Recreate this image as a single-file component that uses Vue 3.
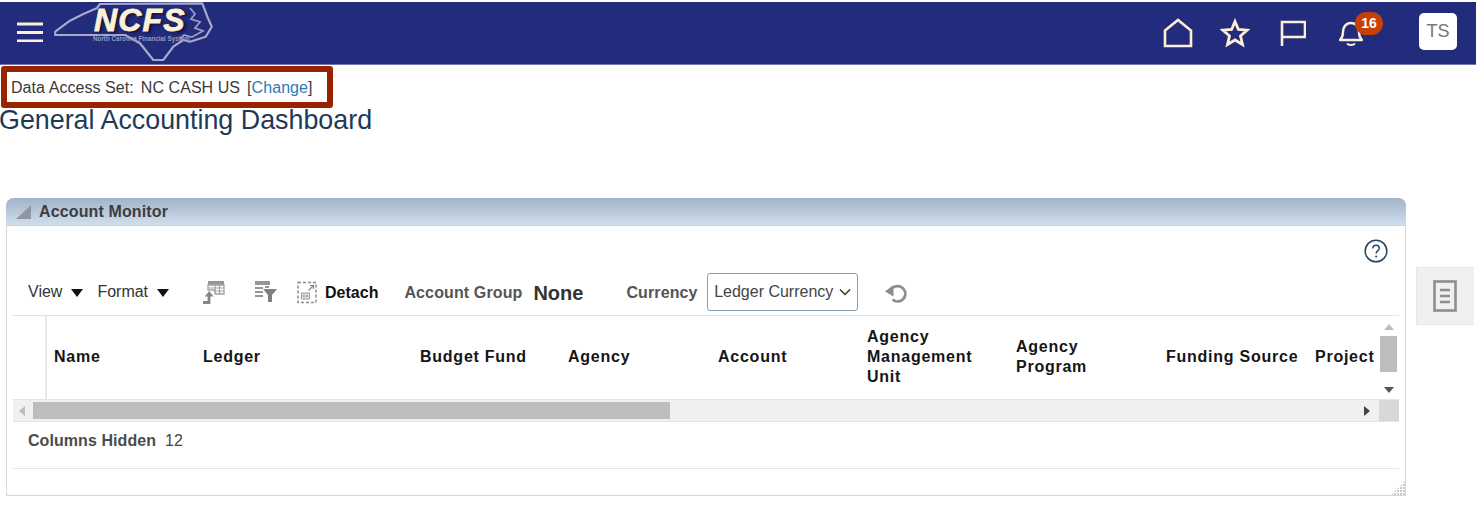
<script setup>
const columns = [
  { label: 'Name', w: 149 },
  { label: 'Ledger', w: 217 },
  { label: 'Budget Fund', w: 148 },
  { label: 'Agency', w: 150 },
  { label: 'Account', w: 149 },
  { label: 'Agency Management Unit', w: 149 },
  { label: 'Agency Program', w: 150 },
  { label: 'Funding Source', w: 149 },
  { label: 'Project', w: 65 },
]
</script>

<template>
  <div class="page">
    <header class="topbar">
      <div class="brand">
        <svg class="burger" width="26" height="20" viewBox="0 0 26 20">
          <path d="M0 2h26M0 10.500h26M0 19h26" stroke="#fdf0d6" stroke-width="3" fill="none" />
        </svg>
        <div class="logo">
          <svg width="160" height="62" viewBox="0 0 160 62">
            <path d="M1.200 29.700 16 18.700 29.300 12 42.700 6.300 46 2 148.300 1.300 153.300 14.700 157.800 24.700 151.700 34.700 136 39.700 129.300 38 119.300 44.700 109.300 58 99.300 58 86 41.300 71 33 39.300 33 1.200 33Z" fill="none" stroke="#a6a9c8" stroke-width="2.200" stroke-linejoin="round" />
            <path d="M136 6 141 12 137 17 146 20 141 26 149 29 138 35 130 33 126 37" fill="none" stroke="#9a9dc0" stroke-width="1.800" />
          </svg>
          <span class="logo-word">NCFS</span>
          <span class="logo-sub">North Carolina Financial System</span>
        </div>
      </div>
      <nav class="actions">
        <svg class="ico" width="30" height="30" viewBox="0 0 30 30">
          <path d="M2 12.500 15 2l13 10.500V28H2Z" fill="none" stroke="#fdf0d6" stroke-width="2.600" stroke-linejoin="miter" />
        </svg>
        <svg class="ico" width="30" height="30" viewBox="0 0 30 30">
          <path d="M15 3.500 18.400 11.500 27 12.200 20.500 17.900 22.500 26.500 15 22 7.500 26.500 9.500 17.900 3 12.200 11.600 11.500Z" fill="none" stroke="#fdf0d6" stroke-width="2.800" stroke-linejoin="miter" />
        </svg>
        <svg class="ico" width="26" height="26" viewBox="0 0 26 26">
          <path d="M2 26V2h23v15H2" fill="none" stroke="#fdf0d6" stroke-width="2.600" />
        </svg>
        <div class="bell">
          <svg width="24" height="26" viewBox="0 0 24 26">
            <path d="M1 20c2-2 3-4 3-8 0-5 3-9 8-9s8 4 8 9c0 4 1 6 3 8Z" fill="none" stroke="#fdf0d6" stroke-width="2.400" stroke-linejoin="round" />
            <path d="M8 23.500c1.500 2 6.500 2 8 0" fill="none" stroke="#fdf0d6" stroke-width="2" />
          </svg>
          <span class="badge">16</span>
        </div>
        <div class="avatar">TS</div>
      </nav>
    </header>

    <div class="das">
      <span>Data Access Set:</span>
      <span class="das-value">NC CASH US</span>
      <span class="das-change">[<a class="link">Change</a>]</span>
    </div>
    <h1 class="title">General Accounting Dashboard</h1>

    <div class="content">
      <section class="panel">
        <div class="panel-head">
          <span class="disclosure"></span>
          <span class="panel-title">Account Monitor</span>
        </div>
        <div class="panel-body">
          <div class="help-row">
            <svg width="24" height="24" viewBox="0 0 24 24">
              <circle cx="12" cy="12" r="10.800" fill="none" stroke="#26435f" stroke-width="1.500" />
              <path d="M8.800 9.500c0-2 1.400-3.300 3.300-3.300s3.200 1.200 3.200 3c0 2.600-3.200 2.700-3.200 5.300" fill="none" stroke="#26435f" stroke-width="1.400" />
              <circle cx="12.100" cy="17.600" r="1" fill="#26435f" />
            </svg>
          </div>
          <div class="toolbar">
            <span class="menu view">View<i class="caret"></i></span>
            <span class="menu format">Format<i class="caret"></i></span>
            <svg class="tool t1" width="22" height="24" viewBox="0 0 22 24">
              <path d="M5 1h16v4H5Z" fill="#969696" />
              <path d="M5 5h16v9H12V10H5Z" fill="none" stroke="#a3a3a3" stroke-width="1.300" />
              <path d="M5 8h16M12 2v11M16.500 2v12M12 11h9" stroke="#a3a3a3" stroke-width="1.200" />
              <path d="M0 22.500h6V16" fill="none" stroke="#858585" stroke-width="2.800" />
              <path d="M1.800 16.500 6.200 11l4.400 5.500Z" fill="#858585" />
            </svg>
            <svg class="tool t2" width="22" height="22" viewBox="0 0 22 22">
              <path d="M0 0h15v4H0ZM0 6h8v2H0ZM0 10h8v2H0ZM0 14h8v2H0Z" fill="#969696" />
              <path d="M10 6h4" stroke="#969696" stroke-width="2" />
              <path d="M8 8h14l-5 6v7h-4v-7Z" fill="#7f7f7f" />
            </svg>
            <svg class="tool t3" width="23" height="23" viewBox="0 0 23 23">
              <rect x="2" y="1.500" width="18" height="20" fill="none" stroke="#8a8a8a" stroke-width="1.500" stroke-dasharray="3 2" />
              <path d="M5.500 12h8v6h-8ZM5.500 15h8M8 12v6M11 12v6" fill="none" stroke="#9a9a9a" stroke-width="1" />
              <path d="M12.500 9.500l4.500-4.500M14 4.500h3.500V8" fill="none" stroke="#8a8a8a" stroke-width="1.200" />
            </svg>
            <span class="detach">Detach</span>
            <span class="lbl group">Account Group</span>
            <span class="none">None</span>
            <span class="lbl currency">Currency</span>
            <span class="select">Ledger Currency
              <svg width="12" height="8" viewBox="0 0 12 8"><path d="M1 1.500 6 6.500l5-5" fill="none" stroke="#333" stroke-width="1.500" /></svg>
            </span>
            <svg class="refresh" width="22" height="20" viewBox="0 0 22 20">
              <path d="M8 3.700A7.700 7.700 0 1 1 7.500 15.500" fill="none" stroke="#8d8d8d" stroke-width="2.700" />
              <path d="M8.500 1v11.500L0 7.500Z" fill="#8d8d8d" />
            </svg>
          </div>

          <div class="table">
            <div class="table-top">
              <div class="grid">
                <div class="spacer"></div>
                <div v-for="c in columns" :key="c.label" class="col" :style="{ width: c.w + 'px' }">{{ c.label }}</div>
              </div>
              <div class="vscroll">
                <i class="arrow up"></i>
                <i class="vthumb"></i>
                <i class="arrow down"></i>
              </div>
            </div>
            <div class="hscroll">
              <div class="htrack">
                <i class="arrow left"></i>
                <i class="hthumb"></i>
                <i class="arrow right"></i>
              </div>
              <div class="corner"></div>
            </div>
          </div>

          <div class="hidden-row"><b>Columns Hidden</b><span>12</span></div>
          <div class="foot"></div>
          <svg class="grip" width="14" height="14" viewBox="0 0 14 14">
            <defs>
              <pattern id="dots" width="3" height="3" patternUnits="userSpaceOnUse"><rect width="2" height="2" fill="#c8c8c8" /></pattern>
            </defs>
            <path d="M14 0V14H0Z" fill="url(#dots)" />
          </svg>
        </div>
      </section>

      <aside class="sidetab">
        <svg width="24" height="32" viewBox="0 0 24 32">
          <rect x="1.500" y="1.500" width="21" height="29" fill="none" stroke="#8f8f8f" stroke-width="2.600" />
          <path d="M7 10h10M7 16h10M7 22h10" stroke="#8f8f8f" stroke-width="2.400" />
        </svg>
      </aside>
    </div>
  </div>
</template>

<style>
html, body { margin: 0; background: #fff; }
</style>

<style scoped>
.page {
  width: 1476px;
  height: 506px;
  overflow: hidden;
  padding-top: 2px;
  box-sizing: border-box;
  font-family: "Liberation Sans", Arial, sans-serif;
  color: #333;
}
.topbar {
  height: 62px;
  background: #232b7c;
  border-bottom: 1px solid #6f76ac;
  display: flex;
  justify-content: space-between;
  align-items: stretch;
}
.brand { display: flex; align-items: flex-start; }
.burger { margin: 20px 11px 0 17px; }
.logo { position: relative; width: 160px; height: 62px; }
.logo svg { display: block; }
.logo-word {
  position: absolute;
  left: 40px;
  top: 5px;
  font-size: 32px;
  line-height: 26px;
  font-weight: 700;
  font-style: italic;
  letter-spacing: 1.200px;
  color: #fdf0d6;
  -webkit-text-stroke: 0.8px #fdf0d6;
  text-shadow: 2px 1px 2px #14183f, 3px 2px 3px rgba(15, 18, 50, 0.7);
}
.logo-sub {
  position: absolute;
  left: 39px;
  top: 33px;
  font-size: 6.300px;
  line-height: 8px;
  font-weight: 700;
  white-space: nowrap;
  color: #9699bd;
}
.actions { display: flex; align-items: flex-start; }
.ico { display: block; }
.ico:nth-child(1) { margin-top: 16px; margin-right: 27px; }
.ico:nth-child(2) { margin-top: 16px; margin-right: 30px; }
.ico:nth-child(3) { margin-top: 18px; margin-right: 33px; }
.bell { position: relative; width: 24px; height: 26px; margin-top: 18px; margin-right: 56px; }
.bell svg { display: block; }
.badge {
  position: absolute;
  left: 16px;
  top: -8px;
  width: 28px;
  height: 23px;
  border-radius: 12px;
  background: #c63f05;
  color: #fff;
  font-size: 14px;
  font-weight: 700;
  line-height: 23px;
  text-align: center;
}
.avatar {
  width: 38px;
  height: 37px;
  margin-top: 11px;
  margin-right: 19px;
  background: #fff;
  border-radius: 5px;
  color: #777;
  font-size: 18px;
  line-height: 37px;
  text-align: center;
}
.das {
  box-sizing: border-box;
  width: 332px;
  height: 42px;
  margin: 1px 0 0 1px;
  border: 6px solid #982300;
  border-radius: 3px;
  padding: 2px 0 0 4px;
  display: flex;
  align-items: center;
  font-size: 16px;
  letter-spacing: 0.06px;
  color: #3a3a3a;
  white-space: nowrap;
}
.das-value { margin-left: 7px; }
.das-change { margin-left: 7px; }
.link { color: #2b7cb5; }
.title {
  margin: -3px 0 0 -1px;
  font-size: 26.850px;
  line-height: 30px;
  font-weight: 400;
  color: #1f3a58;
  white-space: nowrap;
}
.content { display: flex; align-items: flex-start; margin-top: 63px; padding-left: 6px; }
.panel {
  box-sizing: border-box;
  width: 1400px;
  height: 298px;
  border: 1px solid #d3d8db;
  border-top: 0;
  border-radius: 8px 8px 0 0;
}
.panel-head {
  height: 28px;
  margin: 0 -1px;
  border-radius: 8px 8px 0 0;
  border-bottom: 1px solid #c6d5e2;
  box-sizing: border-box;
  background: linear-gradient(#a2b2c9, #d0dfec);
  display: flex;
  align-items: center;
  padding-left: 10px;
}
.disclosure {
  width: 0;
  height: 0;
  border-style: solid;
  border-width: 0 0 14px 15px;
  border-color: transparent transparent #8f97a3 transparent;
  margin-top: 1px;
}
.panel-title {
  margin-left: 8px;
  font-size: 16px;
  font-weight: 700;
  letter-spacing: 0.13px;
  color: #3d3d3d;
}
.panel-body { position: relative; padding: 0 6px 0 6px; }
.help-row {
  display: flex;
  justify-content: flex-end;
  height: 47px;
  padding: 13px 11px 0 0;
  box-sizing: border-box;
}
.toolbar {
  height: 43px;
  display: flex;
  align-items: center;
  border-bottom: 1px solid #e0e4e7;
  font-size: 16px;
  white-space: nowrap;
  box-sizing: border-box;
}
.menu { display: inline-flex; align-items: center; color: #333; position: relative; top: -2px; }
.view { margin-left: 15px; }
.format { margin-left: 14px; }
.caret {
  display: inline-block;
  width: 0;
  height: 0;
  margin-left: 9px;
  margin-top: 1px;
  border-style: solid;
  border-width: 8px 6px 0;
  border-color: #111 transparent transparent;
}
.tool { flex: none; position: relative; top: -2px; }
.t1 { margin-left: 34px; }
.t2 { margin-left: 30px; }
.t3 { margin-left: 19px; }
.detach { margin-left: 6px; font-weight: 700; color: #111; position: relative; top: -1px; }
.lbl { font-weight: 700; color: #555; position: relative; top: -1px; letter-spacing: 0.12px; }
.group { margin-left: 26px; }
.none { margin-left: 11px; font-size: 20px; font-weight: 700; color: #333; position: relative; top: -1px; }
.currency { margin-left: 43px; }
.select {
  margin-left: 9.500px;
  width: 151px;
  height: 38px;
  box-sizing: border-box;
  border: 1px solid #85a0b5;
  border-radius: 3px;
  padding: 0 6px 0 6px;
  display: inline-flex;
  align-items: center;
  justify-content: space-between;
  color: #444;
  background: #fff;
  position: relative;
  top: -2px;
}
.refresh { margin-left: 27px; flex: none; }
.table { width: 1386px; }
.table-top { display: flex; height: 83px; border-bottom: 1px solid #e1e5e8; box-sizing: content-box; }
.grid { width: 1366px; display: flex; align-items: center; overflow: hidden; }
.spacer { width: 32px; flex: none; height: 100%; border-right: 2px solid #e6eaef; margin-right: 7px; }
.col {
  flex: none;
  box-sizing: border-box;
  padding-right: 16px;
  padding-bottom: 2px;
  font-size: 16px;
  line-height: 20px;
  font-weight: 700;
  letter-spacing: 0.75px;
  color: #151515;
  white-space: normal;
}
.vscroll {
  width: 18px;
  display: flex;
  flex-direction: column;
  align-items: center;
  justify-content: space-between;
  padding: 6px 0 6px 2px;
  box-sizing: border-box;
  position: relative;
}
.vthumb { position: absolute; left: 1px; top: 20px; width: 17px; height: 36px; background: #bdbdbd; }
.arrow { display: block; width: 0; height: 0; border-style: solid; }
.up { border-width: 0 5px 6px; border-color: transparent transparent #bdbdbd; margin-top: 2px; }
.down { border-width: 6px 5px 0; border-color: #555 transparent transparent; }
.hscroll { display: flex; height: 21px; border-bottom: 1px solid #e1e5e8; }
.htrack { width: 1366px; background: #f0f0f0; position: relative; display: flex; align-items: center; justify-content: space-between; padding: 0 9px 0 6px; box-sizing: border-box; }
.hthumb { position: absolute; left: 20px; top: 2px; width: 637px; height: 17px; background: #bdbdbd; }
.left { border-width: 5px 6px 5px 0; border-color: transparent #bdbdbd transparent transparent; }
.right { border-width: 5px 0 5px 6px; border-color: transparent transparent transparent #444; }
.corner { width: 20px; background: #d8d8d8; }
.hidden-row { display: flex; height: 38px; padding-bottom: 8px; align-items: center; padding-left: 15px; font-size: 16px; color: #444; border-bottom: 1px solid #e1e6ec; box-sizing: content-box; }
.hidden-row b { color: #4c4c4c; margin-right: 9px; letter-spacing: 0.07px; }
.foot { height: 26px; }
.grip { position: absolute; right: 0; bottom: 0; }
.sidetab {
  box-sizing: border-box;
  width: 58px;
  height: 58px;
  margin-top: 69px;
  margin-left: 10px;
  padding-right: 2px;
  background: #f0f0f0;
  border: 1px solid #e6e6e6;
  border-right: 0;
  display: flex;
  align-items: center;
  justify-content: center;
}
</style>
